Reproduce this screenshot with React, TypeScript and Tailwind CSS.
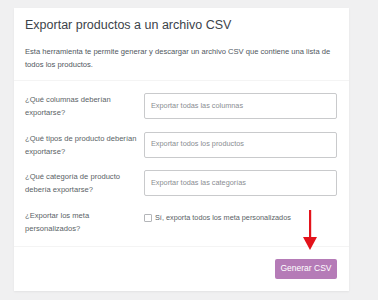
const rows = [
  { label: ["¿Qué columnas deberían", "exportarse?"], placeholder: "Exportar todas las columnas" },
  { label: ["¿Qué tipos de producto deberían", "exportarse?"], placeholder: "Exportar todos los productos" },
  { label: ["¿Qué categoría de producto", "debería exportarse?"], placeholder: "Exportar todas las categorías" },
];

export default function App() {
  return (
    <div
      className="h-[300px] w-[378px] bg-[#f0f0f1] pt-2 pl-[14px]"
      style={{ fontFamily: "'Liberation Sans', Arial, sans-serif" }}
    >
      <div className="relative w-[335px] bg-white shadow-[0_1px_2px_rgba(0,0,0,0.06)]">
        {/* header */}
        <div className="border-b border-[#f4f4f4] px-[11px] pt-[9px] pb-[9px]">
          <h2 className="text-[12.5px] leading-4 text-[#3c434a]">Exportar productos a un archivo CSV</h2>
          <p className="mt-[12px] whitespace-nowrap text-[7.6px] leading-[13px] text-[#50575e]">
            Esta herramienta te permite generar y descargar un archivo CSV que contiene una lista de
            <br />
            todos los productos.
          </p>
        </div>

        {/* fields */}
        <div className="flex flex-col gap-[12.5px] border-b border-[#f4f4f4] pl-[11px] pr-[12px] pt-[12px] pb-[11px]">
          {rows.map((r) => (
            <div key={r.placeholder} className="flex items-start">
              <div className="w-[119px] text-[7.6px] leading-[13px] text-[#5a5f66]">
                {r.label[0]}
                <br />
                {r.label[1]}
              </div>
              <div className="flex h-[26px] w-[193px] items-center rounded-[2px] border border-[#c9cacc] px-[6px] text-[7.3px] text-[#8a8d92]">
                {r.placeholder}
              </div>
            </div>
          ))}
          <div className="flex items-start">
            <div className="w-[119px] text-[7.6px] leading-[13px] text-[#5a5f66]">
              ¿Exportar los meta
              <br />
              personalizados?
            </div>
            <label className="flex items-center gap-[3px] pt-[4px] text-[7.3px] text-[#5a5f66]">
              <span className="h-[8px] w-[8px] rounded-[1px] border border-[#b4b6b9] bg-white" />
              Sí, exporta todos los meta personalizados
            </label>
          </div>
        </div>

        {/* footer */}
        <div className="flex justify-end px-[12px] pt-[12px] pb-[12px]">
          <button className="flex h-[20px] w-[62px] items-center justify-center rounded-[2px] bg-[#b57bb7] text-[8.5px] text-white">
            Generar CSV
          </button>
        </div>

        {/* red arrow pointing at the button */}
        <svg className="absolute left-[289px] top-[202px]" width="14" height="40" viewBox="0 0 14 40">
          <rect x="6" y="0" width="2.2" height="28" fill="#e3131b" />
          <polygon points="0,27 14,27 7,40" fill="#e3131b" />
        </svg>
      </div>
    </div>
  );
}
